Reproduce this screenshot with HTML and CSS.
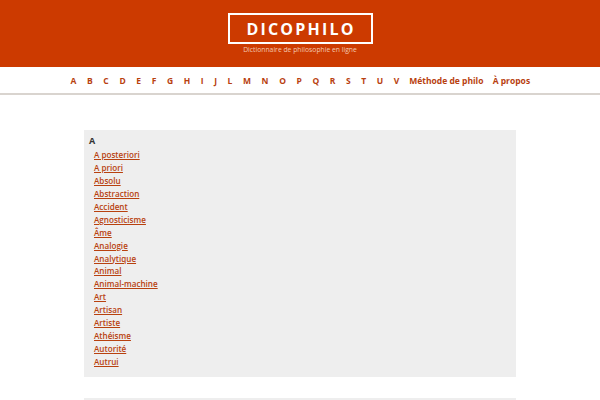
FILE: index.html
```html
<!DOCTYPE html>
<html lang="fr">
<head>
<meta charset="utf-8">
<title>Dicophilo</title>
<link rel="stylesheet" href="styles.css">
</head>
<body>
<header class="site-header">
  <div class="logo-box">DICOPHILO</div>
  <div class="tagline">Dictionnaire de philosophie en ligne</div>
</header>
<nav class="main-nav">
  <a href="#">A</a><a href="#">B</a><a href="#">C</a><a href="#">D</a><a href="#">E</a><a href="#">F</a><a href="#">G</a><a href="#">H</a><a href="#">I</a><a href="#">J</a><a href="#">L</a><a href="#">M</a><a href="#">N</a><a href="#">O</a><a href="#">P</a><a href="#">Q</a><a href="#">R</a><a href="#">S</a><a href="#">T</a><a href="#">U</a><a href="#">V</a><a href="#" class="word">Méthode de philo</a><a href="#" class="word">À propos</a>
</nav>
<main class="content">
  <section class="letter-box">
    <h2 class="letter">A</h2>
    <ul class="terms">
      <li><a href="#">A posteriori</a></li>
      <li><a href="#">A priori</a></li>
      <li><a href="#">Absolu</a></li>
      <li><a href="#">Abstraction</a></li>
      <li><a href="#">Accident</a></li>
      <li><a href="#">Agnosticisme</a></li>
      <li><a href="#">Âme</a></li>
      <li><a href="#">Analogie</a></li>
      <li><a href="#">Analytique</a></li>
      <li><a href="#">Animal</a></li>
      <li><a href="#">Animal-machine</a></li>
      <li><a href="#">Art</a></li>
      <li><a href="#">Artisan</a></li>
      <li><a href="#">Artiste</a></li>
      <li><a href="#">Athéisme</a></li>
      <li><a href="#">Autorité</a></li>
      <li><a href="#">Autrui</a></li>
    </ul>
  </section>
  <section class="letter-box next"></section>
</main>
</body>
</html>
```
FILE: styles.css
```css
html, body { margin: 0; padding: 0; }
body {
  font-family: "Open Sans", "DejaVu Sans", sans-serif;
  background: #fff;
  color: #333;
}
.site-header {
  background: #cc3a00;
  height: 67px;
  display: flex;
  flex-direction: column;
  align-items: center;
  padding-top: 13px;
  box-sizing: border-box;
}
.logo-box {
  width: 145px;
  height: 31px;
  box-sizing: border-box;
  border: 2px solid #fff;
  color: #fff;
  font-weight: 700;
  font-size: 16px;
  letter-spacing: 2.2px;
  display: flex;
  align-items: center;
  justify-content: center;
  padding-left: 2px;
}
.tagline {
  color: #f3c9b3;
  font-size: 6.8px;
  margin-top: 1px;
}
.main-nav {
  height: 26px;
  border-bottom: 2px solid #d9d4cf;
  display: flex;
  justify-content: center;
  align-items: center;
}
.main-nav a {
  color: #b8410f;
  font-weight: 700;
  font-size: 8.5px;
  text-decoration: none;
  padding: 0 5.3px;
}
.main-nav a.word {
  padding: 0 4.6px;
}
.content {
  padding: 35px 84px 0;
}
.letter-box {
  background: #eeeeee;
  padding: 3px 5px 6px;
  height: 247px;
  box-sizing: border-box;
}
.letter-box.next {
  margin-top: 21px;
  height: 20px;
}
.letter {
  margin: 0;
  font-size: 9px;
  font-weight: 700;
  color: #333;
  line-height: 15px;
}
.terms {
  list-style: none;
  margin: 0;
  padding: 1px 0 0 5px;
}
.terms li {
  line-height: 12.94px;
  font-size: 8.1px;
}
.terms a {
  color: #b8410f;
  font-weight: 600;
  text-decoration: underline;
}
```
